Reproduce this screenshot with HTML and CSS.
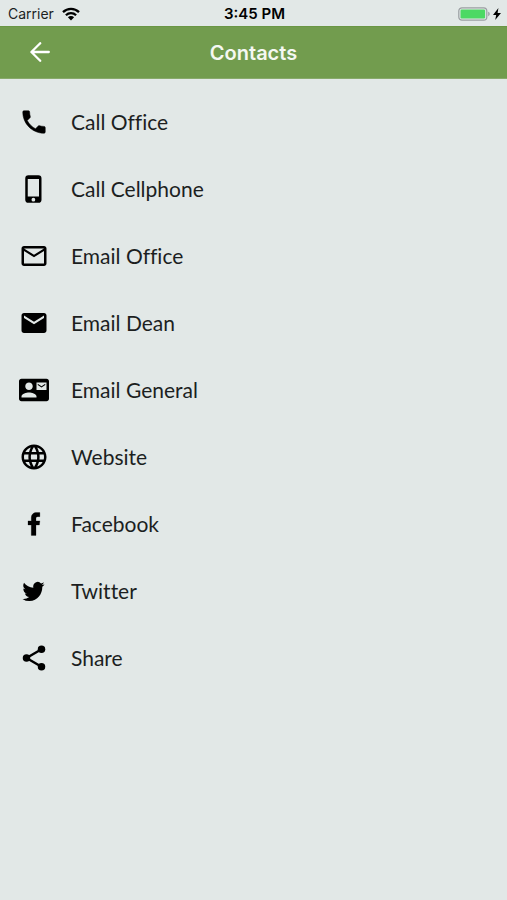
FILE: index.html
```html
<!DOCTYPE html>
<html lang="en">
<head>
<meta charset="utf-8">
<meta name="viewport" content="width=device-width, initial-scale=1">
<title>Contacts</title>
<link rel="stylesheet" href="styles.css">
</head>
<body>
<div class="status">
  <div class="status-side">
    <span>Carrier</span>
    <svg class="wifi" viewBox="0 0 18 14" aria-hidden="true"><path d="M1 5.2a11.5 11.5 0 0 1 16 0M3.9 8.2a7.3 7.3 0 0 1 10.2 0" fill="none" stroke="#000" stroke-width="2.3"/><path d="M9 13.4 5.9 10.3a4.4 4.4 0 0 1 6.2 0z"/></svg>
  </div>
  <span class="time">3:45 PM</span>
  <div class="status-side status-right">
    <svg class="battery" viewBox="0 0 33 14" aria-hidden="true"><rect x=".8" y=".8" width="28" height="12.4" rx="3.2" fill="none" stroke="#9a9ea2" stroke-width="1.2"/><rect x="2.5" y="2.5" width="24.6" height="9" rx="1.2" fill="#4cd964"/><path d="M30.2 4.8c2 .6 2 3.8 0 4.4z" fill="#9a9ea2"/></svg>
    <svg class="bolt" viewBox="0 0 8 12" aria-hidden="true"><path d="M5.4 0 0 6.9h3.2L2.2 12 8 4.9H4.6z"/></svg>
  </div>
</div>
<header class="bar">
  <button class="back" type="button" aria-label="Back"><svg viewBox="0 0 20 20" aria-hidden="true"><path d="M10.2 1.2 1.4 10l8.8 8.8M1.8 10h17" fill="none" stroke="#fff" stroke-width="2.3" stroke-linecap="round" stroke-linejoin="round"/></svg></button>
  <h1>Contacts</h1>
</header>
<main>
  <ul class="list">
    <li><a href="#office"><svg viewBox="0 0 24 24" aria-hidden="true"><path d="M6.62 10.79c1.44 2.83 3.76 5.14 6.59 6.59l2.2-2.2c.27-.27.67-.36 1.02-.24 1.12.37 2.33.57 3.57.57.55 0 1 .45 1 1V20c0 .55-.45 1-1 1-9.39 0-17-7.61-17-17 0-.55.45-1 1-1h3.5c.55 0 1 .45 1 1 0 1.25.2 2.45.57 3.57.11.35.03.74-.25 1.02l-2.2 2.2z" stroke="#000" stroke-width=".4"/></svg><span>Call Office</span></a></li>
    <li><a href="#cell"><svg viewBox="0 0 24 24" aria-hidden="true"><path d="M15.5 1h-8A2.5 2.5 0 0 0 5 3.5v17A2.5 2.5 0 0 0 7.5 23h8a2.5 2.5 0 0 0 2.5-2.5v-17A2.5 2.5 0 0 0 15.5 1zm-4 21a1.5 1.5 0 1 1 0-3 1.5 1.5 0 0 1 0 3zm4.5-4H7V4h9v14z"/></svg><span>Call Cellphone</span></a></li>
    <li><a href="#email-office"><svg viewBox="0 0 24 24" aria-hidden="true"><path d="M20 4H4c-1.1 0-1.990.9-1.990 2L2 18c0 1.1.9 2 2 2h16c1.1 0 2-.9 2-2V6c0-1.1-.9-2-2-2zm0 14H4V8l8 5 8-5v10zm-8-7L4 6h16l-8 5z"/></svg><span>Email Office</span></a></li>
    <li><a href="#email-dean"><svg viewBox="0 0 24 24" aria-hidden="true"><path d="M20 4H4c-1.1 0-1.990.9-1.990 2L2 18c0 1.1.9 2 2 2h16c1.1 0 2-.9 2-2V6c0-1.1-.9-2-2-2zm0 4-8 5-8-5V6l8 5 8-5v2z"/></svg><span>Email Dean</span></a></li>
    <li><a href="#email-general"><svg viewBox="0 0 24 24" aria-hidden="true"><path d="M21 8V7l-3 2-3-2v1l3 2 3-2zm1-5H2C.9 3 0 3.9 0 5v14c0 1.1.9 2 2 2h20c1.1 0 1.990-.9 1.990-2L24 5c0-1.1-.9-2-2-2zM8 6c1.660 0 3 1.340 3 3s-1.340 3-3 3-3-1.340-3-3 1.340-3 3-3zm6 12H2v-1c0-2 4-3.1 6-3.1s6 1.1 6 3.1v1zm8-6h-8V6h8v6z"/></svg><span>Email General</span></a></li>
    <li><a href="#website"><svg viewBox="0 0 24 24" aria-hidden="true"><path d="M11.990 2C6.470 2 2 6.480 2 12s4.470 10 9.990 10C17.520 22 22 17.520 22 12S17.520 2 11.990 2zm6.930 6h-2.950c-.320-1.250-.780-2.450-1.380-3.560 1.840.630 3.370 1.910 4.330 3.560zM12 4.040c.830 1.200 1.480 2.530 1.910 3.960h-3.820c.430-1.430 1.080-2.760 1.910-3.960zM4.260 14C4.100 13.360 4 12.690 4 12s.100-1.360.260-2h3.380c-.080.660-.140 1.320-.140 2s.060 1.340.140 2H4.260zm.820 2h2.950c.320 1.250.780 2.450 1.380 3.560-1.840-.630-3.370-1.900-4.330-3.560zm2.950-8H5.080c.960-1.660 2.490-2.930 4.330-3.560C8.810 5.550 8.350 6.750 8.030 8zM12 19.960c-.830-1.200-1.480-2.530-1.910-3.960h3.820c-.430 1.430-1.080 2.760-1.910 3.960zM14.340 14H9.660c-.090-.660-.160-1.320-.160-2s.070-1.350.160-2h4.680c.090.650.160 1.320.160 2s-.070 1.340-.160 2zm.250 5.560c.600-1.110 1.060-2.310 1.380-3.560h2.950c-.960 1.650-2.490 2.930-4.330 3.560zM16.360 14c.080-.660.140-1.320.140-2s-.060-1.340-.140-2h3.380c.160.640.260 1.310.260 2s-.100 1.360-.260 2h-3.380z"/></svg><span>Website</span></a></li>
    <li><a href="#facebook"><svg viewBox="0 0 24 24" aria-hidden="true"><path d="M16.700 2.900v3.200h-1.700c-1.200 0-1.400.600-1.400 1.500v1.900h3.100l-.400 3.300h-2.700v8.300H9.800v-8.300H7.200V9.500h2.600V7.100c0-2.800 1.700-4.300 4.300-4.300 1.200 0 2.300.050 2.600.100z" stroke="#000" stroke-width=".2"/></svg><span>Facebook</span></a></li>
    <li><a href="#twitter"><svg viewBox="0 0 24 24" aria-hidden="true"><path transform="translate(2.800 2.900) scale(.735 .79)" d="M23.950 4.570a10 10 0 0 1-2.820.770 4.960 4.960 0 0 0 2.160-2.720c-.950.550-2 .950-3.120 1.180a4.920 4.920 0 0 0-8.380 4.480C7.690 8.090 4.070 6.130 1.640 3.160a4.920 4.920 0 0 0 1.520 6.570 4.900 4.900 0 0 1-2.230-.620v.060a4.920 4.920 0 0 0 3.950 4.830 5 5 0 0 1-2.210.080 4.940 4.940 0 0 0 4.600 3.420A9.870 9.870 0 0 1 0 19.540a14 14 0 0 0 7.550 2.210c9.050 0 14-7.500 14-13.980 0-.210 0-.420-.020-.630a9.940 9.940 0 0 0 2.420-2.570z"/></svg><span>Twitter</span></a></li>
    <li><a href="#share"><svg viewBox="0 0 24 24" aria-hidden="true"><path d="M6 12 18 5M6 12l12 7" fill="none" stroke="#000" stroke-width="2"/><circle cx="18" cy="5" r="3"/><circle cx="6" cy="12" r="3"/><circle cx="18" cy="19" r="3"/></svg><span>Share</span></a></li>
  </ul>
</main>
</body>
</html>
```
FILE: styles.css
```css
* { box-sizing: border-box; }

body {
  margin: 0;
  min-height: 100vh;
  background: #e2e8e7;
  color: #1c1f1f;
  font-family: Lato, "Open Sans", sans-serif;
}

svg { display: block; flex: none; }

.status {
  display: grid;
  grid-template-columns: 1fr auto 1fr;
  align-items: center;
  height: 26px;
  padding: 2px 6px 0 8px;
  font: 14px/20px Inter, sans-serif;
}

.status-side { display: flex; align-items: center; gap: 8px; }
.status-right { justify-content: flex-end; gap: 2px; }
.time { font-size: 15px; font-weight: 600; color: #000; }
.wifi { width: 18px; height: 14px; }
.battery { width: 33px; height: 14px; }
.bolt { width: 8px; height: 12px; }

.bar {
  display: grid;
  grid-template-columns: 80px 1fr 80px;
  align-items: center;
  height: 53px;
  background: #729c4e;
  border-top: 1px solid #6a9644;
  border-bottom: 1px solid #88aa6b;
}

.back {
  display: flex;
  align-items: center;
  justify-content: center;
  height: 50px;
  padding: 0 0 2px;
  border: 0;
  background: none;
}
.back svg { width: 20px; height: 20px; }

h1 {
  margin: 0;
  color: #f5f8f2;
  font: 600 20px/28px Inter, sans-serif;
  text-align: center;
}

.list { margin: 0; padding: 9px 0; list-style: none; }

.list a {
  display: flex;
  align-items: center;
  gap: 22px;
  height: 67px;
  padding: 0 19px;
  color: inherit;
  font-size: 21px;
  font-variant-ligatures: none;
  line-height: 28px;
  text-decoration: none;
}
.list svg { width: 30px; height: 30px; fill: #000; }
```
